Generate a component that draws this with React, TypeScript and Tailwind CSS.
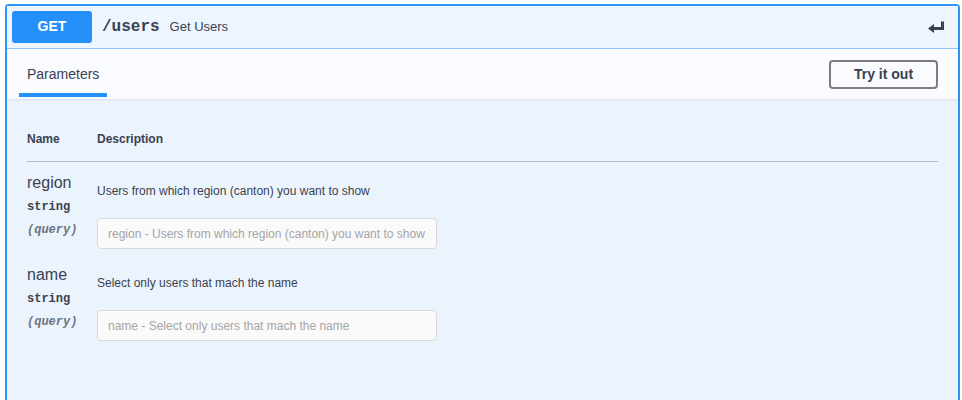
import React from 'react';

const params = [
    {
        name: 'region',
        type: 'string',
        location: '(query)',
        description: 'Users from which region (canton) you want to show',
    },
    {
        name: 'name',
        type: 'string',
        location: '(query)',
        description: 'Select only users that mach the name',
    },
];

const EnterIcon: React.FC = () => (
    <svg width="17" height="12" viewBox="0 0 17 12" className="text-[#3b4151]">
        <path d="M13 0.5h3v8.5H5.5v-3H13z" fill="currentColor" />
        <path d="M0 7.5L6 3v9z" fill="currentColor" />
    </svg>
);

const App: React.FC = () => {
    return (
        <div className="min-h-screen bg-white pt-[4px] pl-[5px] pr-[2px] font-['Liberation_Sans',Arial,sans-serif] text-[#3b4151]">
            <div className="h-[400px] rounded-t-[4px] border-2 border-b-0 border-[#2f93fb] bg-[#ebf4fd]">
                {/* Summary */}
                <div className="flex h-[43px] items-center border-b border-[#8fc3f6] bg-[#edf5fe] px-[5px] pb-[1px]">
                    <div className="flex h-[32px] w-[80px] items-center justify-center rounded-[3px] bg-[#2590fc] text-[14px] font-bold text-white">
                        GET
                    </div>
                    <span className="px-[10px] font-['Liberation_Mono',monospace] text-[16px] font-bold leading-none">/users</span>
                    <span className="text-[13px]">Get Users</span>
                    <div className="ml-auto mr-[8px] mt-[1px] flex items-center">
                        <EnterIcon />
                    </div>
                </div>

                {/* Section header */}
                <div className="flex h-[50px] items-center justify-between bg-[#f9fbfe] px-[20px] shadow-[0_1px_2px_rgba(0,0,0,0.08)]">
                    <div className="relative -ml-[8px] flex h-full items-center px-[8px]">
                        <span className="text-[14px]">Parameters</span>
                        <div className="absolute bottom-[2px] left-0 right-0 h-[4px] bg-[#2590fc]" />
                    </div>
                    <button className="flex h-[29px] w-[109px] items-center justify-center rounded-[4px] border-2 border-[#7d7d7d] bg-transparent text-[14px] font-bold">
                        Try it out
                    </button>
                </div>

                {/* Parameters table */}
                <div className="px-[20px] pt-[32px]">
                    <div className="flex border-b border-[#b4bac6] pb-[14px] text-[12px] font-bold leading-[16px]">
                        <div className="w-[70px]">Name</div>
                        <div>Description</div>
                    </div>
                    {params.map(p => (
                        <div key={p.name} className="flex pb-[5px] pt-[11px]">
                            <div className="w-[70px]">
                                <div className="text-[16px] leading-[20px]">{p.name}</div>
                                <div className="mt-[6px] font-['Liberation_Mono',monospace] text-[12px] font-bold leading-[16px]">{p.type}</div>
                                <div className="mt-[7px] font-['Liberation_Mono',monospace] text-[12px] font-bold italic leading-[16px] text-[#6f7380]">{p.location}</div>
                            </div>
                            <div className="pt-[10px]">
                                <div className="text-[12px] leading-[16px]">{p.description}</div>
                                <input
                                    type="text"
                                    placeholder={`${p.name} - ${p.description}`}
                                    className="mt-[19px] h-[31px] w-[340px] rounded-[4px] border border-[#d9d9d9] bg-[#fafafa] px-[10px] text-[12px] outline-none placeholder:text-[#a5a5a5]"
                                />
                            </div>
                        </div>
                    ))}
                </div>
            </div>
        </div>
    );
};

export default App;
